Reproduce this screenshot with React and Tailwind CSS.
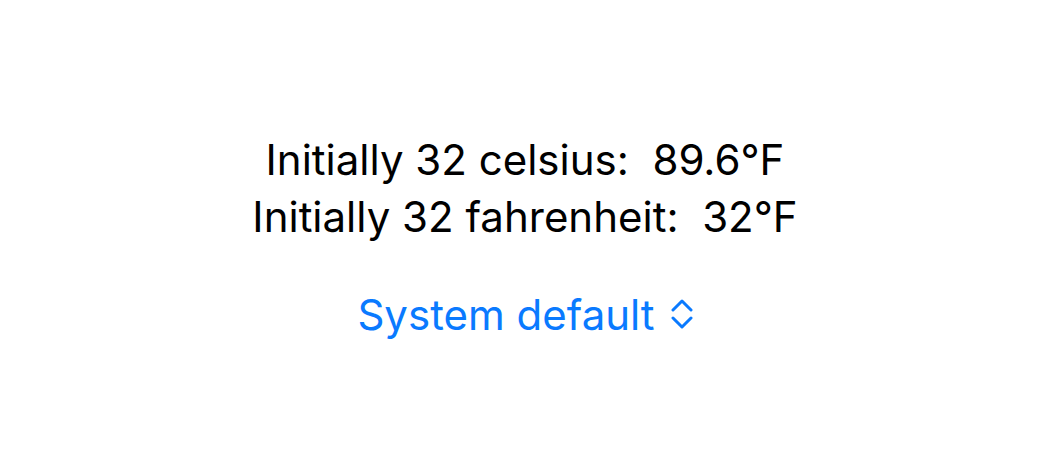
export default function App() {
  return (
    <div className="flex h-[467px] w-full flex-col items-center justify-center bg-white pt-[6px] font-['Inter',sans-serif] text-black">
      <div className="flex flex-col items-center text-[42px] leading-[57px] whitespace-pre">
        <p>Initially 32 celsius:  89.6°F</p>
        <p>Initially 32 fahrenheit:  32°F</p>
      </div>
      <button className="mt-[41px] flex items-center gap-[16px] text-[42px] leading-[57px] text-[#0a7aff]">
        <span>System default</span>
        <svg width="22" height="30" viewBox="0 0 22 30" fill="none" stroke="currentColor" strokeWidth="3" strokeLinecap="round" strokeLinejoin="round">
          <path d="M2 11 L11 2 L20 11" />
          <path d="M2 19 L11 28 L20 19" />
        </svg>
      </button>
    </div>
  );
}
